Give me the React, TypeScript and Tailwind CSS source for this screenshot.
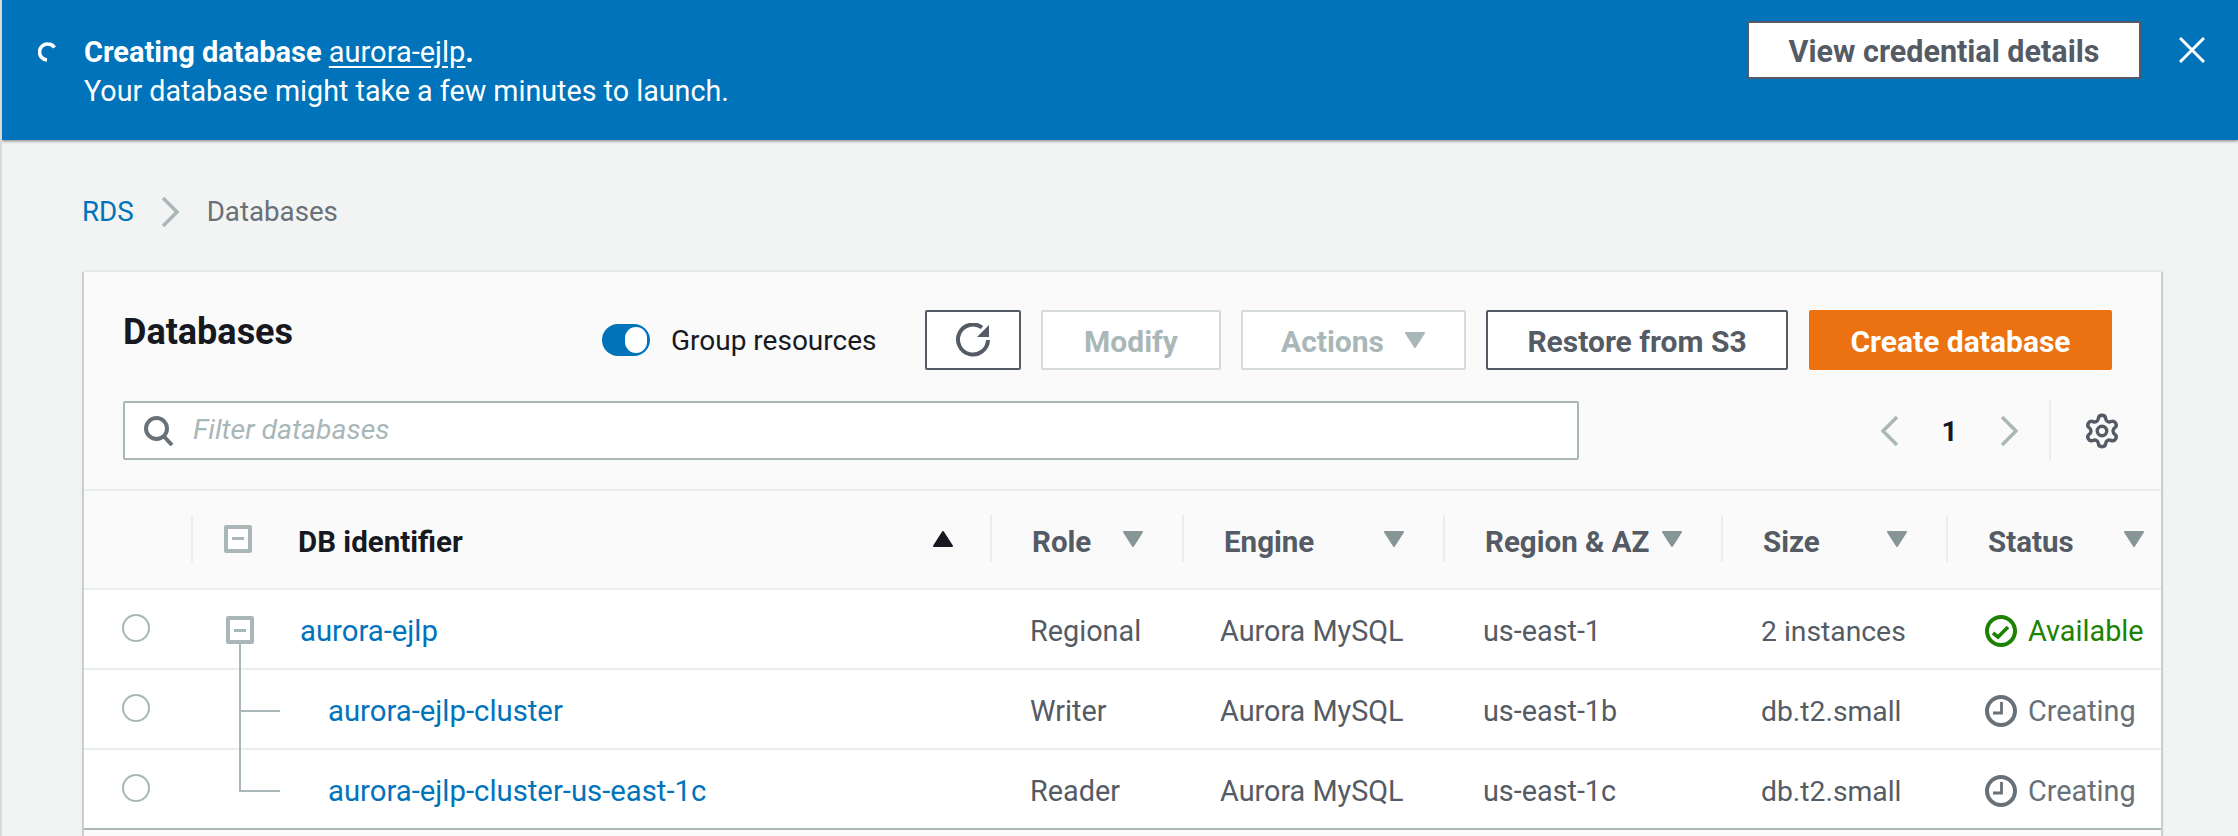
import React from 'react'
import { Settings } from 'lucide-react'

const FONT = "font-['Roboto','Liberation_Sans',sans-serif]"

// ── Icons ─────────────────────────────────────────────────────────────────────

function Spinner() {
  return (
    <svg width="20" height="20" viewBox="0 0 20 20" fill="none" className="shrink-0">
      <path d="M16.5 5.5 A8 8 0 0 0 10 2 A8 8 0 0 0 9 18" stroke="#fff" strokeWidth="3.6" />
    </svg>
  )
}

function CloseIcon() {
  return (
    <svg width="26" height="26" viewBox="0 0 26 26" fill="none" className="shrink-0">
      <path d="M1 1 L25 25 M25 1 L1 25" stroke="#fff" strokeWidth="3" />
    </svg>
  )
}

function Chevron({ left = false }: { left?: boolean }) {
  return (
    <svg width="18" height="30" viewBox="0 0 18 30" fill="none" className="shrink-0">
      <path d={left ? 'M16 1 L2 15 L16 29' : 'M2 1 L16 15 L2 29'} stroke="#aab7b8" strokeWidth="3.5" />
    </svg>
  )
}

function RefreshIcon() {
  return (
    <svg width="36" height="34" viewBox="0 0 36 34" fill="none">
      <path d="M27 4.5 A15 15 0 1 0 33 17" stroke="#545b64" strokeWidth="4" />
      <path d="M34 2 V14 H22 Z" fill="#545b64" />
    </svg>
  )
}

function SearchIcon() {
  return (
    <svg width="30" height="30" viewBox="0 0 30 30" fill="none" className="shrink-0">
      <circle cx="12.5" cy="12.5" r="10.5" stroke="#687078" strokeWidth="4" />
      <path d="M19.5 20 L28 29" stroke="#687078" strokeWidth="4" />
    </svg>
  )
}

function CheckCircleIcon() {
  return (
    <svg width="32" height="32" viewBox="0 0 32 32" fill="none" className="shrink-0">
      <circle cx="16" cy="16" r="14" stroke="#1d8102" strokeWidth="4" />
      <path d="M8 18 L13 22 L23 12" stroke="#1d8102" strokeWidth="3.6" />
    </svg>
  )
}

function ClockIcon() {
  return (
    <svg width="32" height="32" viewBox="0 0 32 32" fill="none" className="shrink-0">
      <circle cx="16" cy="16" r="14" stroke="#687078" strokeWidth="4" />
      <path d="M16.5 7 V18 H8" stroke="#687078" strokeWidth="2.8" />
    </svg>
  )
}

function Caret({ up = false, color = '#879596' }: { up?: boolean; color?: string }) {
  return (
    <svg width="22" height="16" viewBox="0 0 22 16" className="shrink-0">
      <path
        d={up ? 'M11 1 L20 15 H2 Z' : 'M2 1 H20 L11 15 Z'}
        fill={color}
        stroke={color}
        strokeWidth="2"
        strokeLinejoin="round"
      />
    </svg>
  )
}

function TreeBox() {
  return (
    <span className="flex h-[28px] w-[28px] items-center justify-center rounded-[2px] border-[4px] border-[#aab7b8] bg-white">
      <span className="h-[3px] w-[12px] bg-[#aab7b8]" />
    </span>
  )
}

// ── Table ─────────────────────────────────────────────────────────────────────

const COLUMNS = 'grid grid-cols-[107px_799px_192px_261px_278px_225px_1fr]'

function HeaderCell({ label, pr = 'pr-[38px]' }: { label: string; pr?: string }) {
  return (
    <div className={`flex h-[47px] items-center justify-between border-l-2 border-[#eaeded] pl-[40px] ${pr}`}>
      <span className="pt-[7px] text-[29.5px] font-bold text-[#545b64]">{label}</span>
      <Caret />
    </div>
  )
}

const ROWS = [
  { name: 'aurora-ejlp', role: 'Regional', region: 'us-east-1', size: '2 instances', status: 'Available', child: false, last: false },
  { name: 'aurora-ejlp-cluster', role: 'Writer', region: 'us-east-1b', size: 'db.t2.small', status: 'Creating', child: true, last: false },
  { name: 'aurora-ejlp-cluster-us-east-1c', role: 'Reader', region: 'us-east-1c', size: 'db.t2.small', status: 'Creating', child: true, last: true },
]

function Row({ row }: { row: (typeof ROWS)[number] }) {
  const available = row.status === 'Available'
  return (
    <div className={`${COLUMNS} h-[80px] bg-white text-[28.8px] text-[#545b64] ${row.last ? 'border-b-2 border-[#aab7b8]' : 'border-b-2 border-[#eaeded]'}`}>
      <div className="flex pl-[38px] pt-[24px]">
        <span className="h-[28px] w-[28px] rounded-full border-2 border-[#aab7b8] bg-white" />
      </div>
      <div className="relative flex items-center pt-[6px] text-[29.3px]">
        {row.child ? (
          <>
            <span className={`absolute left-[48px] top-[-2px] w-[2px] bg-[#aab7b8] ${row.last ? 'h-[44px]' : 'h-[82px]'}`} />
            <span className="absolute left-[48px] top-[40px] h-[2px] w-[41px] bg-[#aab7b8]" />
            <a className="ml-[137px] text-[#0073bb]">{row.name}</a>
          </>
        ) : (
          <>
            <span className="absolute left-[35px] top-[26px]"><TreeBox /></span>
            <span className="absolute left-[48px] top-[54px] h-[26px] w-[2px] bg-[#aab7b8]" />
            <a className="ml-[109px] text-[#0073bb]">{row.name}</a>
          </>
        )}
      </div>
      <div className="flex items-center pl-[40px] pt-[6px]">{row.role}</div>
      <div className="flex items-center pl-[38px] pt-[6px]">Aurora MySQL</div>
      <div className="flex items-center pl-[40px] pt-[6px]">{row.region}</div>
      <div className="flex items-center pl-[40px] pt-[6px] text-[28.3px]">{row.size}</div>
      <div className={`flex items-start gap-[11px] pl-[39px] pt-[25px] ${available ? 'text-[#1d8102]' : 'text-[#687078]'}`}>
        {available ? <CheckCircleIcon /> : <ClockIcon />}
        <span className="-mt-[4px] leading-[40px]">{row.status}</span>
      </div>
    </div>
  )
}

// ── Page ──────────────────────────────────────────────────────────────────────

export default function App() {
  return (
    <div className={`${FONT} h-[836px] w-full overflow-hidden border-l-2 border-[#d5dbdb] bg-[#f2f3f3]`}>
      <div className="flex h-[140px] items-start bg-[#0073bb] pl-[36px] pr-[33px] pt-[21px] text-[29px] leading-[39px] text-white shadow-[0_1px_3px_rgba(0,0,0,0.5)]">
        <div className="mt-[21px]"><Spinner /></div>
        <div className="ml-[26px] mt-[12px] flex-1">
          <div><span className="font-bold">Creating database</span> <a className="underline underline-offset-4">aurora-ejlp</a><span className="font-bold">.</span></div>
          <div className="text-[28.7px]">Your database might take a few minutes to launch.</div>
        </div>
        <button className="h-[58px] w-[394px] rounded-[2px] border-2 border-[#545b64] bg-white pt-[3px] text-[30.5px] font-bold text-[#545b64]">View credential details</button>
        <div className="ml-[38px] mt-[16px]"><CloseIcon /></div>
      </div>

      <div className="flex h-[132px] items-center pl-[80px] pt-[12px] text-[27.7px]">
        <a className="text-[#0073bb]">RDS</a>
        <span className="ml-[27px] mr-[28px]"><Chevron /></span>
        <span className="text-[#687078]">Databases</span>
      </div>

      <div className="ml-[80px] w-[2081px] border-x-2 border-[#c9cfcf] bg-[#fafafa] shadow-[0_-1px_2px_rgba(0,0,0,0.08)]">
        <div className="h-[219px] border-b-2 border-[#eaeded] pl-[39px] pt-[38px]">
          <div className="flex h-[60px] items-center">
            <h2 className="mb-[16px] w-[479px] shrink-0 text-[36px] font-bold text-[#16191f]">Databases</h2>
            <span className="flex h-[32px] w-[48px] shrink-0 items-center justify-end rounded-full bg-[#0073bb] pr-[3px]">
              <span className="h-[26px] w-[22px] rounded-full bg-white" />
            </span>
            <span className="ml-[21px] w-[204px] shrink-0 whitespace-nowrap pt-[2px] text-[28px] text-[#16191f]">Group resources</span>
            <button className="ml-[50px] flex h-[60px] w-[96px] shrink-0 items-center justify-center rounded-[2px] border-2 border-[#545b64] bg-white"><RefreshIcon /></button>
            <button className="ml-[20px] h-[60px] w-[180px] shrink-0 rounded-[2px] border-2 border-[#d5dbdb] bg-white pt-[2px] text-[30px] font-bold text-[#aab7b8]">Modify</button>
            <button className="ml-[20px] flex h-[60px] w-[225px] shrink-0 items-center justify-center gap-[20px] rounded-[2px] border-2 border-[#d5dbdb] bg-white text-[30px] font-bold text-[#aab7b8]"><span className="pt-[2px]">Actions</span><Caret color="#aab7b8" /></button>
            <button className="ml-[20px] h-[60px] w-[302px] shrink-0 rounded-[2px] border-2 border-[#545b64] bg-white pt-[2px] text-[30px] font-bold text-[#545b64]">Restore from S3</button>
            <button className="ml-[21px] h-[60px] w-[303px] shrink-0 rounded-[2px] bg-[#ec7211] pt-[2px] text-[30px] font-bold text-white">Create database</button>
          </div>
          <div className="mt-[31px] flex h-[59px] items-center">
            <div className="flex h-[59px] w-[1456px] shrink-0 items-center gap-[19px] rounded-[2px] border-2 border-[#aab7b8] bg-white pl-[19px]">
              <SearchIcon />
              <span className="text-[28.4px] italic text-[#aab7b8]">Filter databases</span>
            </div>
            <div className="ml-[302px] flex h-[60px] shrink-0 items-center">
              <Chevron left />
              <span className="w-[101px] pt-[2px] text-center text-[28px] font-bold text-[#16191f]">1</span>
              <Chevron />
            </div>
            <span className="ml-[31px] h-[60px] w-[2px] shrink-0 bg-[#eaeded]" />
            <Settings size={38} color="#545b64" strokeWidth={3.4} absoluteStrokeWidth className="ml-[32px] shrink-0" />
          </div>
        </div>

        <div className={`${COLUMNS} h-[99px] items-center border-b-2 border-[#eaeded] pb-[2px]`}>
          <div />
          <div className="flex h-[47px] items-center border-l-2 border-[#eaeded] pl-[31px] pr-[36px]">
            <TreeBox />
            <span className="ml-[46px] flex-1 pt-[7px] text-[29.5px] font-bold text-[#16191f]">DB identifier</span>
            <Caret up color="#16191f" />
          </div>
          <HeaderCell label="Role" />
          <HeaderCell label="Engine" />
          <HeaderCell label="Region &amp; AZ" />
          <HeaderCell label="Size" />
          <HeaderCell label="Status" pr="pr-[16px]" />
        </div>

        {ROWS.map((row) => (
          <Row key={row.name} row={row} />
        ))}
        <div className="h-[20px]" />
      </div>
    </div>
  )
}
